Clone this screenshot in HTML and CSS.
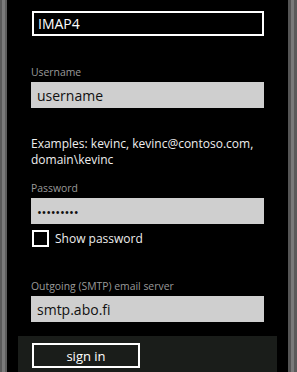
FILE: index.html
```html
<!DOCTYPE html>
<html lang="en">
<head>
    <meta charset="UTF-8">
    <meta name="viewport" content="width=device-width, initial-scale=1.0">
    <title>Account setup</title>
    <link rel="stylesheet" href="styles.css">
</head>
<body>
    <div class="phone">
        <div class="frame-left"></div>
        <div class="screen">
            <div class="form">
                <div class="text-box active">IMAP4</div>

                <label class="field-label label-user">Username</label>
                <div class="text-box filled">username</div>

                <p class="hint">Examples: kevinc, kevinc@contoso.com, domain\kevinc</p>

                <label class="field-label label-pass">Password</label>
                <div class="text-box filled dots">&bull;&bull;&bull;&bull;&bull;&bull;&bull;&bull;&bull;</div>

                <div class="check-row">
                    <span class="check-box"></span>
                    <span>Show password</span>
                </div>

                <label class="field-label label-smtp">Outgoing (SMTP) email server</label>
                <div class="text-box filled">smtp.abo.fi</div>
            </div>

            <div class="app-bar">
                <button class="bar-button">sign in</button>
            </div>
        </div>
        <div class="frame-right"></div>
    </div>
</body>
</html>
```

FILE: styles.css
```css
body {
    margin: 0;
    padding: 0;
    background-color: #000;
    font-family: "Open Sans", "Noto Sans", sans-serif;
    color: #fff;
    overflow: hidden;
}
.phone {
    display: flex;
    height: 372px;
}
.frame-left {
    width: 7px;
    background: linear-gradient(to right, #5a5a5a 0, #5a5a5a 2px, #7a7a7a 2px, #7a7a7a 5px, #5e5e5e 5px);
}
.frame-right {
    width: 9px;
    background: linear-gradient(to right, #555 0, #555 3px, #7a7a7a 3px, #7a7a7a 6px, #5a5a5a 6px);
}
.screen {
    flex: 1;
    display: flex;
    flex-direction: column;
    background-color: #000;
}
.form {
    padding: 11px 0 0 24px;
    display: flex;
    flex-direction: column;
}
.text-box {
    box-sizing: border-box;
    width: 233px;
    height: 26px;
    padding: 0 6px;
    display: flex;
    align-items: center;
    font-size: 14px;
}
.text-box.active {
    width: 232px;
    height: 25px;
    margin-left: 1px;
    border: 2px solid #fff;
    background-color: #000;
    color: #fff;
    padding-left: 4px;
}
.text-box.filled {
    background-color: #cfcfcf;
    color: #111;
}
.text-box.dots {
    font-size: 13px;
    letter-spacing: -0.3px;
    padding-top: 1px;
}
.field-label {
    display: block;
    font-size: 10.4px;
    color: #9a9a9a;
    line-height: 14px;
    margin-bottom: 3px;
}
.label-user {
    margin-top: 29px;
}
.label-pass {
    margin-top: 13px;
}
.label-smtp {
    margin-top: 32px;
}
.hint {
    margin: 28px 0 0;
    font-size: 12px;
    line-height: 16px;
    color: #eee;
    width: 250px;
}
.check-row {
    display: flex;
    align-items: center;
    gap: 6px;
    margin-top: 6px;
    font-size: 12px;
    color: #eee;
}
.check-box {
    box-sizing: border-box;
    width: 17px;
    height: 17px;
    margin-left: 1px;
    border: 2px solid #fff;
}
.app-bar {
    margin: 14px 11px 0;
    flex: 1;
    background-color: #1a1d1a;
    padding: 7px 0 0 14px;
}
.bar-button {
    box-sizing: border-box;
    width: 108px;
    height: 25px;
    background-color: #1a1d1a;
    border: 2px solid #fff;
    color: #fff;
    font-family: "Open Sans", "Noto Sans", sans-serif;
    font-size: 13px;
    padding: 0;
}
```
